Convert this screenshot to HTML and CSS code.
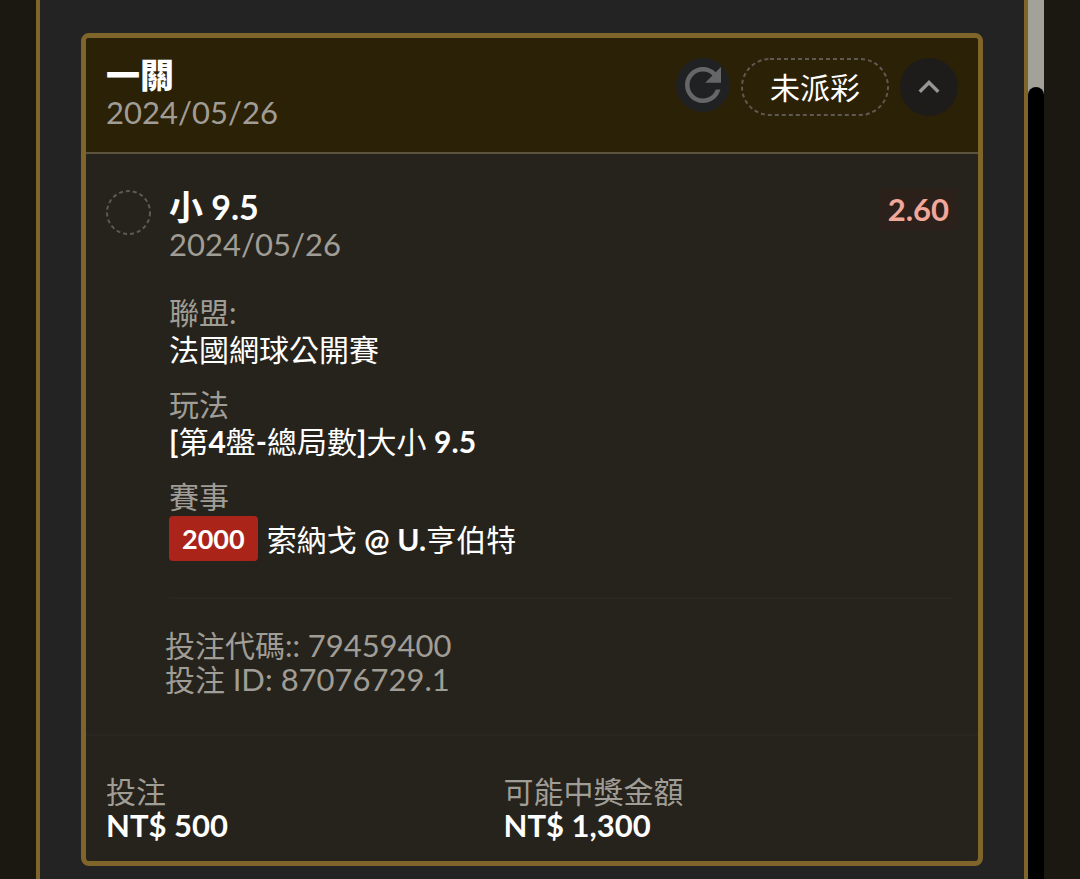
FILE: index.html
```html
<!DOCTYPE html>
<html lang="zh-TW">
<head>
    <meta charset="UTF-8">
    <meta name="viewport" content="width=device-width, initial-scale=1.0">
    <title>投注記錄</title>
    <link rel="stylesheet" href="styles.css">
</head>
<body>
    <div class="panel">
        <main class="panel-content">
            <article class="bet-card">
                <header class="bet-header">
                    <div class="bet-heading">
                        <h1>一關</h1>
                        <p class="date">2024/05/26</p>
                    </div>
                    <div class="bet-actions">
                        <button class="refresh-btn" type="button" aria-label="重新整理">
                            <svg viewBox="0 0 24 24"><path d="M17.65 6.35C16.2 4.9 14.21 4 12 4c-4.42 0-7.99 3.58-7.99 8s3.57 8 7.99 8c3.73 0 6.84-2.55 7.73-6h-2.08c-.82 2.33-3.04 4-5.65 4-3.31 0-6-2.69-6-6s2.69-6 6-6c1.66 0 3.14.69 4.22 1.78L13 11h7V4z"/></svg>
                        </button>
                        <span class="status">
                            <svg class="status-outline"><rect x="1" y="1" rx="28"/></svg>
                            未派彩
                        </span>
                        <button class="toggle-btn" type="button" aria-label="收合">
                            <svg viewBox="0 0 24 24"><path d="M12 8l-6 6 1.41 1.41L12 10.83l4.59 4.58L18 14z"/></svg>
                        </button>
                    </div>
                </header>

                <section class="selection">
                    <svg class="selection-mark" viewBox="0 0 45 45"><circle cx="22.5" cy="22.5" r="21.5"/></svg>
                    <div class="selection-body">
                        <div class="selection-top">
                            <div>
                                <h2>小 9.5</h2>
                                <p class="date">2024/05/26</p>
                            </div>
                            <span class="odds">2.60</span>
                        </div>

                        <dl class="details">
                            <div>
                                <dt>聯盟:</dt>
                                <dd>法國網球公開賽</dd>
                            </div>
                            <div>
                                <dt>玩法</dt>
                                <dd><b>[</b>第<b>4</b>盤<b>-</b>總局數<b>]</b>大小 <b>9.5</b></dd>
                            </div>
                            <div>
                                <dt>賽事</dt>
                                <dd class="match"><span class="badge">2000</span><span>索納戈 <b>@</b> <b>U.</b>亨伯特</span></dd>
                            </div>
                        </dl>

                        <div class="codes">
                            <p>投注代碼:: <span class="num">79459400</span></p>
                            <p>投注 <span class="num">ID: 87076729.1</span></p>
                        </div>
                    </div>
                </section>

                <footer class="bet-footer">
                    <div>
                        <p class="label">投注</p>
                        <p class="amount">NT$ 500</p>
                    </div>
                    <div>
                        <p class="label">可能中獎金額</p>
                        <p class="amount">NT$ 1,300</p>
                    </div>
                </footer>
            </article>
        </main>
        <div class="scrollbar">
            <div class="scrollbar-track"></div>
        </div>
    </div>
</body>
</html>
```

FILE: styles.css
```css
* {
    margin: 0;
    padding: 0;
    box-sizing: border-box;
}

body {
    font-family: Lato, 'Noto Sans CJK TC', sans-serif;
    font-size: 30px;
    line-height: 34px;
    color: #fff;
    background-color: #1b1812;
    padding: 0 36px;
}

button {
    border: none;
    border-radius: 50%;
    cursor: pointer;
    display: flex;
    align-items: center;
    justify-content: center;
}

.panel {
    min-height: 100vh;
    display: flex;
}

.panel-content {
    flex: 1;
    padding: 33px 41px 13px;
    background-color: #232323;
    border: solid #80652b;
    border-width: 0 4px;
}

.scrollbar {
    width: 16px;
    padding-top: 87px;
    background-color: #a3a299;
    display: flex;
}

.scrollbar-track {
    flex: 1;
    background-color: #000;
    border-radius: 8px 8px 0 0;
}

.bet-card {
    background-color: #26231c;
    border: 5px solid #80652b;
    border-radius: 8px;
}

.bet-header {
    display: flex;
    justify-content: space-between;
    padding: 18px 20px 22px;
    background-color: #2b2107;
    border-bottom: 2px solid #5c533d;
    border-radius: 3px 3px 0 0;
}

h1,
h2 {
    font-size: 34px;
    font-weight: 700;
    line-height: 38px;
}

h1 {
    font-weight: 900;
}

.date {
    font-size: 31px;
    line-height: 36px;
    color: #a09d96;
}

.bet-actions {
    display: flex;
    align-items: flex-start;
    gap: 11px;
    padding-top: 2px;
}

.refresh-btn {
    width: 54px;
    height: 54px;
    background-color: #202122;
}

.refresh-btn svg {
    width: 54px;
    height: 54px;
    fill: #666;
}

.status {
    position: relative;
    padding: 12px 29px;
}

.status-outline {
    position: absolute;
    inset: 0;
    width: 100%;
    height: 100%;
}

.status-outline rect {
    width: calc(100% - 2px);
    height: calc(100% - 2px);
}

.status-outline,
.selection-mark {
    fill: none;
    stroke: #5e5a50;
    stroke-width: 2;
    stroke-dasharray: 4 3;
}

.toggle-btn {
    width: 58px;
    height: 58px;
    background-color: #1d1c1b;
}

.toggle-btn svg {
    width: 42px;
    height: 42px;
    fill: #969696;
}

.selection {
    display: flex;
    gap: 18px;
    padding: 34px 20px 38px;
}

.selection-mark {
    flex: none;
    width: 45px;
    height: 45px;
    margin-top: 2px;
}

.selection-body {
    flex: 1;
}

.selection-top {
    display: flex;
    justify-content: space-between;
    align-items: flex-start;
}

.odds {
    padding: 4px 9px;
    font-size: 31px;
    font-weight: 700;
    color: #f2a79b;
    background-color: #2c201a;
}

.details {
    display: grid;
    gap: 18px;
    padding: 32px 0 36px;
    margin-right: 5px;
    border-bottom: 2px solid #2a2722;
}

.details dt {
    line-height: 36px;
    color: #a09d96;
}

.details dd {
    line-height: 38px;
}

.details .match {
    display: flex;
    align-items: center;
    gap: 9px;
    padding-top: 2px;
}

.details b {
    font-weight: 700;
}

.badge {
    padding: 0 13px;
    font-size: 27px;
    font-weight: 700;
    line-height: 45px;
    background-color: #aa2419;
    border-radius: 4px;
}

.codes {
    padding-top: 29px;
    margin-left: -4px;
    color: #a09d96;
}

.num {
    font-size: 31px;
}

.bet-footer {
    display: grid;
    grid-template-columns: 7fr 8fr;
    padding: 38px 20px 19px;
    border-top: 2px solid #2a2722;
}

.label {
    color: #a09d96;
}

.amount {
    font-size: 31px;
    font-weight: 700;
}
```
